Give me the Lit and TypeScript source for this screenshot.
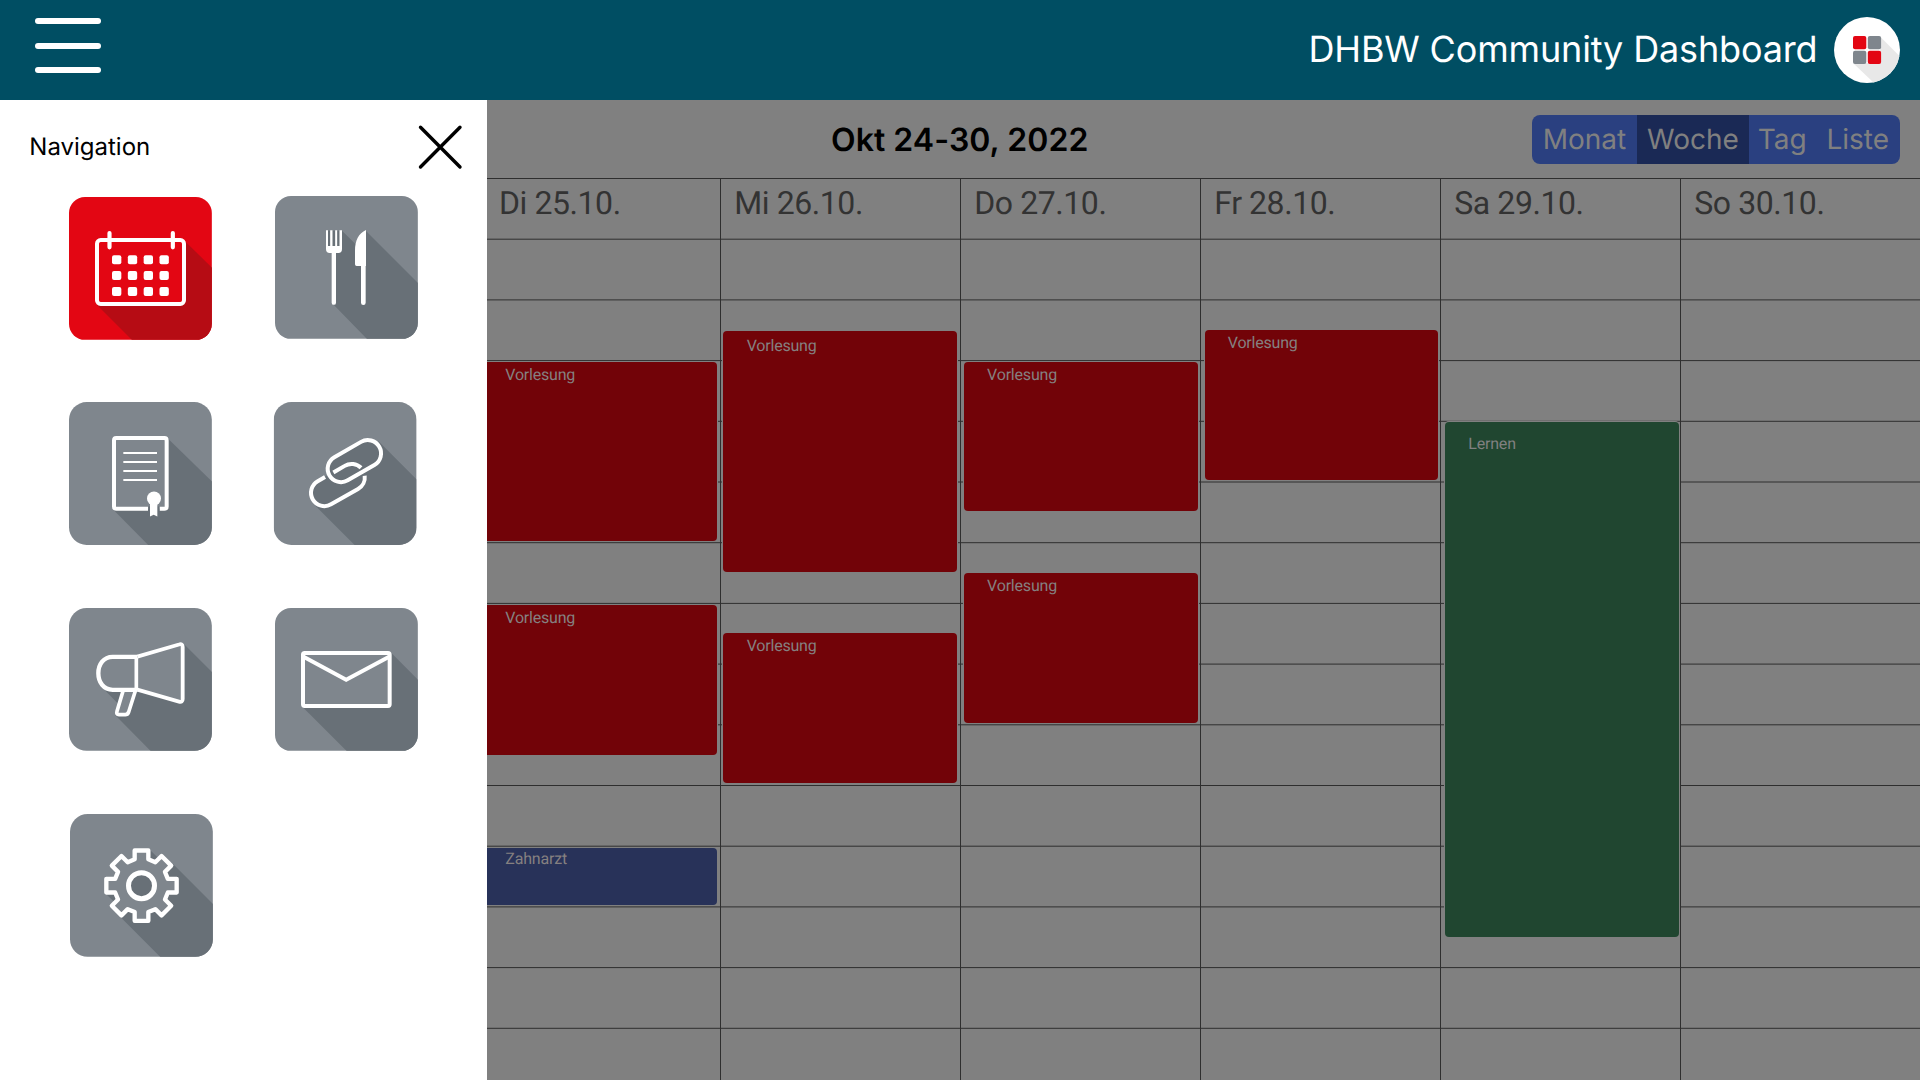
import { LitElement, html, css, svg } from "lit";
import { customElement, property } from "lit/decorators.js";
import { classMap } from "lit/directives/class-map.js";
import { styleMap } from "lit/directives/style-map.js";

type Kind = "lecture" | "private" | "study";

interface CalendarEvent {
  title: string;
  kind: Kind;
  top: number;
  bottom: number;
  baseline: number;
}

interface Day {
  label: string;
  /** Horizontal inset of the event boxes from the column's left edge. */
  inset: number;
  width: number;
  events: CalendarEvent[];
}

const lecture = (top: number, bottom: number, baseline: number): CalendarEvent => ({
  title: "Vorlesung",
  kind: "lecture",
  top,
  bottom,
  baseline,
});

/* Vertical values are measured from the upper edge of the week grid. */
const DAYS: Day[] = [
  {
    label: "Di 25.10.",
    inset: -5,
    width: 234.7,
    events: [
      lecture(183.7, 363, 202.6),
      lecture(426.7, 576.7, 445.6),
      { title: "Zahnarzt", kind: "private", top: 669.7, bottom: 727.3, baseline: 686.4 },
    ],
  },
  { label: "Mi 26.10.", inset: 2.4, width: 233.9, events: [lecture(153, 394, 173.3), lecture(454.5, 604.6, 473.4)] },
  { label: "Do 27.10.", inset: 2.8, width: 234, events: [lecture(183.7, 333.4, 202.6), lecture(395, 545, 413)] },
  { label: "Fr 28.10.", inset: 3.5, width: 233.9, events: [lecture(152, 302, 170)] },
  {
    label: "Sa 29.10.",
    inset: 4,
    width: 234,
    events: [{ title: "Lernen", kind: "study", top: 244.3, bottom: 759, baseline: 272 }],
  },
  { label: "So 30.10.", inset: 4, width: 234, events: [] },
];

const ROW_HEIGHT = 60.7;

const gearPath = (): string => {
  const points: string[] = [];
  for (let i = 0; i < 8; i++) {
    const a = (i * Math.PI) / 4;
    for (const [x, y] of [[-20.5, -79], [-20.5, -105.5], [20.5, -105.5], [20.5, -79]]) {
      const px = 424.5 + x * Math.cos(a) - y * Math.sin(a);
      const py = 316 + x * Math.sin(a) + y * Math.cos(a);
      points.push(`${px.toFixed(1)} ${py.toFixed(1)}`);
    }
  }
  return `M${points.join("L")}Z`;
};

interface Tile {
  id: string;
  x: number;
  y: number;
  radius: number;
  active?: boolean;
  dx?: number;
  dy?: number;
  shadow: string;
  glyph: unknown;
}

const TILES: Tile[] = [
  {
    id: "calendar",
    x: 207,
    y: 591,
    radius: 48,
    active: true,
    shadow: "M551 720L636 803V1020H396L291 915Z",
    glyph: svg`
      <rect class="line face" x="291" y="720" width="261" height="192" rx="11" stroke-width="12" />
      <path class="line" d="M328.500 699V742M518.500 699V742" stroke-width="12.500" stroke-linecap="round" />
      ${[766, 813, 861].map((y) =>
        [336, 383.5, 431, 478.5].map(
          (x) => svg`<rect class="solid" x=${x} y=${y} width="28" height="27" rx="6" />`,
        ),
      )}`,
  },
  {
    id: "canteen",
    x: 825,
    y: 588,
    radius: 48,
    dy: -1,
    shadow: "M978 692L1026 692L1067 733L1098 693L1254 849V1017H1101L1001 914V757L980 750Z",
    glyph: svg`
      <path class="solid" d="M978 691H984V738H990.500V691H997.500V738H1005.500V691H1011.500V738H1018.500V691H1026V747Q1026 759 1015 759H1008V908A6.500 6.500 0 0 1 995 908V759H989Q978 759 978 747Z" />
      <path class="solid" d="M1098 690C1076 700 1065 722 1065 752V793Q1065 798 1070 798H1083V908A7 7 0 0 0 1097 908V798H1098Z" />`,
  },
  {
    id: "exams",
    x: 207,
    y: 66,
    radius: 53,
    dy: -0.9,
    shadow: "M502 174L636 304V495H445L340 389Z",
    glyph: svg`
      <path class="face" d="M342 174H500V386H342Z" />
      <path class="line" d="M444 386H349Q342 386 342 379V181Q342 174 349 174H493Q500 174 500 181V379Q500 386 493 386H479" stroke-width="12" />
      <path class="line" d="M370 219H471M370 246H471M370 273H471M370 300H471" stroke-width="6" />
      <path class="shade" d="M445 379H478V393H445Z" />
      <circle class="solid" cx="462" cy="355" r="21" />
      <path class="solid" d="M450 362V409L461 404L472 409V362Z" />`,
  },
  {
    id: "links",
    x: 821,
    y: 66,
    radius: 53,
    dx: -1.3,
    dy: -0.9,
    shadow:
      "M1137 185L1250 298V495H1064L940 371Q925 350 933 328Q940 308 953 303L985 284Q975 255 1003 231L1083 185Q1112 168 1137 185Z",
    glyph: svg`
      <path class="line" d="M975 291L953 303.300A40 40 0 0 0 993 372.700L1074 326.700A40 40 0 0 0 1094 287" stroke-width="12" />
      <path class="line" d="M1000 277L1034 257.300A40 40 0 0 1 1083 263" stroke-width="12" />
      <path class="line" d="M1003 231.300L1083 185.300A40 40 0 0 1 1123 254.700L1043 300.700A40 40 0 0 1 1003 231.300Z" stroke-width="12" />`,
  },
  {
    id: "news",
    x: 207,
    y: 684,
    radius: 53,
    shadow: "M551 791L636 876V1113H452L346 1006L358 975L314 930Z",
    glyph: svg`
      <path class="line face" d="M370 930L351 994Q348 1004 357 1004H376Q383 1004 386 996L407 930" stroke-width="11" />
      <path class="line face" d="M412 830.500H338C311 830.500 295 853 295 880S311 929.500 338 929.500H412" stroke-width="13" />
      <path class="line face" d="M412 830L537 793.500Q548 790 548 801V957Q548 968 537 965L412 929" stroke-width="11.500" />
      <path class="line" d="M409 832V930" stroke-width="11" />`,
  },
  {
    id: "mail",
    x: 825,
    y: 684,
    radius: 48,
    shadow: "M1172 817L1254 899V1113H1040L907 980Z",
    glyph: svg`
      <rect class="line face" x="909" y="819" width="260" height="159" rx="5" stroke-width="12" />
      <path class="line" d="M912 831L1038.500 899L1166 831" stroke-width="12" />`,
  },
  {
    id: "settings",
    x: 210,
    y: 101,
    radius: 53,
    dx: 1,
    shadow: "M447 206L480 238L514 246L639 371V530H481L362 411L340 362L318 341Z",
    glyph: svg`
      <path class="line face" d=${gearPath()} stroke-width="13" stroke-linejoin="round" />
      <circle class="line shade" cx="424.500" cy="316" r="39" stroke-width="15" />`,
  },
];

@customElement("nav-tile")
class NavTile extends LitElement {
  @property({ attribute: false }) tile!: Tile;

  static styles = css`
    :host {
      display: block;
      width: 143px;
      height: 143px;
    }
    svg {
      display: block;
      width: 143px;
      height: 143px;
    }
    .tile {
      --face: #7f868d;
      --shade: #687077;
    }
    .active {
      --face: #e30613;
      --shade: #b60c14;
    }
    .face {
      fill: var(--face);
    }
    .shade {
      fill: var(--shade);
    }
    .line {
      stroke: #fff;
    }
    .line:not(.face):not(.shade) {
      fill: none;
    }
    .solid {
      fill: #fff;
    }
  `;

  render() {
    const t = this.tile;
    return html`<svg class=${classMap({ tile: true, active: !!t.active })} viewBox="${t.x} ${t.y} 429 429">
      <defs>
        <clipPath id="edge"><rect x=${t.x} y=${t.y} width="428.500" height="428.500" rx=${t.radius} /></clipPath>
      </defs>
      <rect class="face" x=${t.x} y=${t.y} width="428.500" height="428.500" rx=${t.radius} />
      <path class="shade" clip-path="url(#edge)" d=${t.shadow} />
      ${t.glyph}
    </svg>`;
  }
}

@customElement("nav-drawer")
class NavDrawer extends LitElement {
  static styles = css`
    :host {
      display: flex;
      flex-direction: column;
      box-sizing: border-box;
      width: 487px;
      flex: none;
      background: #fff;
    }
    .head {
      display: flex;
      justify-content: space-between;
      align-items: center;
      height: 92px;
      box-sizing: border-box;
      padding: 2px 23px 0 29.300px;
    }
    .title {
      font: 400 24px/30px Inter, sans-serif;
      color: #000;
      margin-bottom: 1px;
    }
    .close {
      display: block;
      width: 48px;
      height: 48px;
    }
    .grid {
      display: grid;
      grid-template-columns: 143px 143px;
      grid-auto-rows: 143px;
      column-gap: 63px;
      row-gap: 62.600px;
      padding: 5px 0 0 69px;
    }
  `;

  render() {
    return html`
      <div class="head">
        <span class="title">Navigation</span>
        <svg class="close" viewBox="0 0 48 48" fill="none" stroke="#000" stroke-width="3.400" stroke-linecap="round">
          <path d="M4.500 4.200L44 44M44 4.200L4.500 44" />
        </svg>
      </div>
      <div class="grid">
        ${TILES.map(
          (t) => html`<nav-tile
            .tile=${t}
            style=${styleMap({ transform: `translate(${t.dx ?? 0}px, ${t.dy ?? 0}px)` })}
          ></nav-tile>`,
        )}
      </div>
    `;
  }
}

@customElement("week-calendar")
class WeekCalendar extends LitElement {
  static styles = css`
    :host {
      display: flex;
      flex-direction: column;
      flex: 1;
      min-width: 0;
      background: #808080;
    }
    .toolbar {
      display: flex;
      align-items: center;
      justify-content: space-between;
      height: 78px;
      box-sizing: border-box;
      padding: 1px 20px 0 344px;
    }
    .range {
      font: 600 32px/40px Inter, sans-serif;
      color: #000;
      white-space: nowrap;
      margin-top: 1px;
      letter-spacing: 0.050px;
    }
    .views {
      display: grid;
      grid-template-columns: 105px 112px 66.500px 84.500px;
      height: 49px;
      border-radius: 8px;
      overflow: hidden;
      background: #2a4080;
      color: #808080;
      font: 400 28px/49px Inter, sans-serif;
      text-align: center;
    }
    .current {
      background: #1a2955;
    }
    .week {
      position: relative;
      flex: 1;
      display: grid;
      grid-template-columns: 234px repeat(5, 240px);
      overflow: hidden;
    }
    .rows {
      position: absolute;
      left: 0;
      top: 0;
      width: 1433px;
      height: 902px;
    }
    .day {
      position: relative;
      box-sizing: border-box;
      border-right: 1px solid #2e2e2e;
      padding: 1px 0 0 13.300px;
    }
    .day:first-of-type {
      padding-left: 12px;
    }
    .day:last-child {
      border-right: none;
    }
    .label {
      font: 400 32px/48px Roboto, sans-serif;
      letter-spacing: -0.430px;
      color: #333;
      white-space: nowrap;
    }
    .event {
      position: absolute;
      box-sizing: border-box;
      border-radius: 4px;
      box-shadow: 0 0 0 1px #808080;
      padding-left: 23.300px;
      font: 400 16px/20px Roboto, sans-serif;
      letter-spacing: -0.200px;
      color: #858080;
    }
    .lecture {
      background: #720308;
    }
    .private {
      background: #283259;
    }
    .study {
      background: #204630;
      color: #808080;
    }
  `;

  render() {
    return html`
      <div class="toolbar">
        <span class="range">Okt 24-30, 2022</span>
        <div class="views">
          <span>Monat</span><span class="current">Woche</span><span>Tag</span><span>Liste</span>
        </div>
      </div>
      <div class="week">
        <svg class="rows" viewBox="0 0 1433 902" stroke="#2e2e2e" stroke-width="1">
          ${Array.from({ length: 15 }, (_, i) => {
            const y = 0.5 + i * ROW_HEIGHT;
            return svg`<path d="M0 ${y}H1433" />`;
          })}
        </svg>
        ${DAYS.map(
          (day) => html`<div class="day">
            <div class="label">${day.label}</div>
            ${day.events.map(
              (e) => html`<div
                class="event ${e.kind}"
                style=${styleMap({
                  left: `${day.inset}px`,
                  width: `${day.width}px`,
                  top: `${e.top}px`,
                  height: `${e.bottom - e.top}px`,
                  paddingTop: `${e.baseline - e.top - 15.5}px`,
                })}
              >
                ${e.title}
              </div>`,
            )}
          </div>`,
        )}
      </div>
    `;
  }
}

@customElement("app-root")
class AppRoot extends LitElement {
  static styles = css`
    :host {
      display: flex;
      flex-direction: column;
      width: 1920px;
      height: 1080px;
      overflow: hidden;
      background: #fff;
      text-rendering: geometricPrecision;
    }
    .bar {
      display: flex;
      align-items: center;
      justify-content: space-between;
      height: 100px;
      flex: none;
      box-sizing: border-box;
      padding: 0 20px 0 35px;
      background: #004e63;
    }
    .burger {
      display: flex;
      flex-direction: column;
      gap: 18.700px;
      width: 66px;
      margin-bottom: 8.400px;
    }
    .burger span {
      height: 6px;
      border-radius: 3px;
      background: #fff;
    }
    .brand {
      display: flex;
      align-items: center;
      gap: 16.500px;
    }
    .name {
      font: 400 36px/44px Inter, sans-serif;
      letter-spacing: -0.150px;
      color: #fff;
      margin-bottom: 2px;
    }
    .logo {
      display: block;
      width: 66px;
      height: 66px;
    }
    .main {
      display: flex;
      flex: 1;
      min-height: 0;
    }
  `;

  render() {
    return html`
      <header class="bar">
        <div class="burger"><span></span><span></span><span></span></div>
        <div class="brand">
          <span class="name">DHBW Community Dashboard</span>
          <svg class="logo" viewBox="0 0 66 66">
            <defs>
              <clipPath id="disc"><circle cx="33" cy="33" r="33" /></clipPath>
            </defs>
            <circle cx="33" cy="33" r="33" fill="#fff" />
            <path clip-path="url(#disc)" fill="#e8e8e8" d="M46.500 20L66 39.500V66H40L19.500 46.500Z" />
            <path fill="#fff" d="M20 20H46V46H20Z" />
            <rect x="19" y="19" width="13.300" height="13.300" rx="2" fill="#e30613" />
            <rect x="33.800" y="19" width="13.300" height="13.300" rx="2" fill="#7f868d" />
            <rect x="19" y="33.700" width="13.300" height="13.300" rx="2" fill="#7f868d" />
            <rect x="33.800" y="33.700" width="13.300" height="13.300" rx="2" fill="#e30613" />
          </svg>
        </div>
      </header>
      <div class="main">
        <nav-drawer></nav-drawer>
        <week-calendar></week-calendar>
      </div>
    `;
  }
}
